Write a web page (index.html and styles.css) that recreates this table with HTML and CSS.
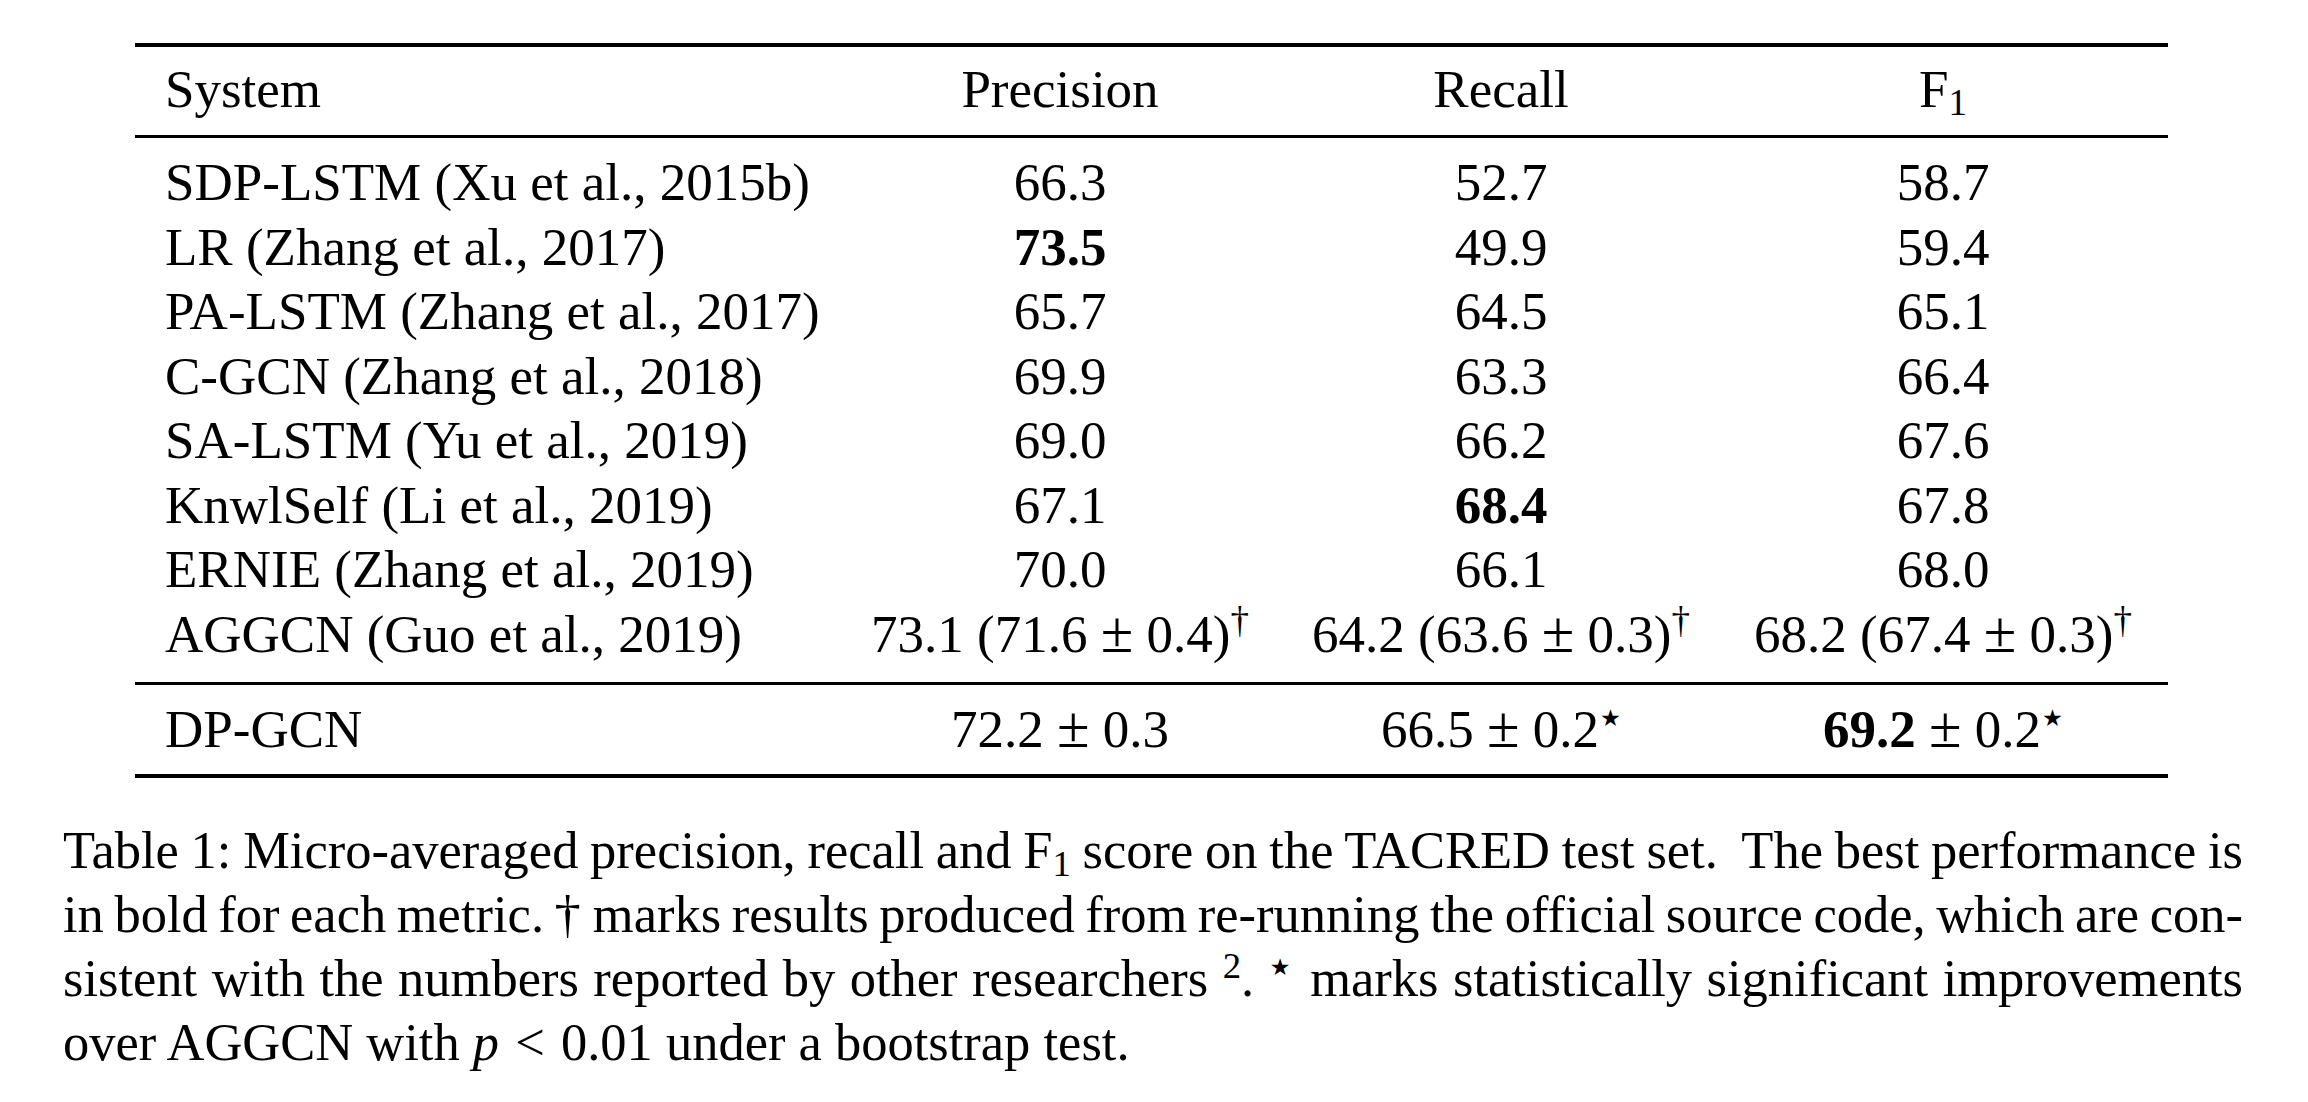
FILE: index.html
```html
<!DOCTYPE html>
<html lang="en">
<head>
<meta charset="utf-8">
<title>Table 1</title>
<link rel="stylesheet" href="styles.css">
</head>
<body>
<div class="figure">
  <div class="booktab">
    <div class="rule heavy"></div>
    <div class="row head">
      <div class="cell sys">System</div>
      <div class="cell">Precision</div>
      <div class="cell">Recall</div>
      <div class="cell">F<sub class="sub">1</sub></div>
    </div>
    <div class="rule light"></div>
    <div class="group">
      <div class="row">
        <div class="cell sys">SDP-LSTM (Xu et al., 2015b)</div>
        <div class="cell">66.3</div>
        <div class="cell">52.7</div>
        <div class="cell">58.7</div>
      </div>
      <div class="row">
        <div class="cell sys">LR (Zhang et al., 2017)</div>
        <div class="cell"><b>73.5</b></div>
        <div class="cell">49.9</div>
        <div class="cell">59.4</div>
      </div>
      <div class="row">
        <div class="cell sys">PA-LSTM (Zhang et al., 2017)</div>
        <div class="cell">65.7</div>
        <div class="cell">64.5</div>
        <div class="cell">65.1</div>
      </div>
      <div class="row">
        <div class="cell sys">C-GCN (Zhang et al., 2018)</div>
        <div class="cell">69.9</div>
        <div class="cell">63.3</div>
        <div class="cell">66.4</div>
      </div>
      <div class="row">
        <div class="cell sys">SA-LSTM (Yu et al., 2019)</div>
        <div class="cell">69.0</div>
        <div class="cell">66.2</div>
        <div class="cell">67.6</div>
      </div>
      <div class="row">
        <div class="cell sys">KnwlSelf (Li et al., 2019)</div>
        <div class="cell">67.1</div>
        <div class="cell"><b>68.4</b></div>
        <div class="cell">67.8</div>
      </div>
      <div class="row">
        <div class="cell sys">ERNIE (Zhang et al., 2019)</div>
        <div class="cell">70.0</div>
        <div class="cell">66.1</div>
        <div class="cell">68.0</div>
      </div>
      <div class="row">
        <div class="cell sys">AGGCN (Guo et al., 2019)</div>
        <div class="cell">73.1 (71.6 <span class="pm">±</span> 0.4)<sup class="sup">†</sup></div>
        <div class="cell">64.2 (63.6 <span class="pm">±</span> 0.3)<sup class="sup">†</sup></div>
        <div class="cell">68.2 (67.4 <span class="pm">±</span> 0.3)<sup class="sup">†</sup></div>
      </div>
    </div>
    <div class="rule light"></div>
    <div class="group last">
      <div class="row">
        <div class="cell sys">DP-GCN</div>
        <div class="cell">72.2 <span class="pm">±</span> 0.3</div>
        <div class="cell">66.5 <span class="pm">±</span> 0.2<sup class="sup star">★</sup></div>
        <div class="cell"><b>69.2</b> <span class="pm">±</span> 0.2<sup class="sup star">★</sup></div>
      </div>
    </div>
    <div class="rule heavy"></div>
  </div>

  <p class="caption">
    <span class="line">Table 1: Micro-averaged precision, recall and F<sub class="sub">1</sub> score on the TACRED test set. &nbsp;The best performance is</span>
    <span class="line">in bold for each metric. † marks results produced from re-running the official source code, which are con-</span>
    <span class="line">sistent with the numbers reported by other researchers <sup class="sup">2</sup>. <sup class="sup star">★</sup> marks statistically significant improvements</span>
    <span class="line final">over AGGCN with <i>p</i> <span class="rel">&lt;</span> 0.01 under a bootstrap test.</span>
  </p>
</div>
</body>
</html>
```

FILE: styles.css
```css
* {
  box-sizing: border-box;
}

html,
body {
  margin: 0;
  padding: 0;
  background: #ffffff;
}

body {
  font-family: "Liberation Serif", "Times New Roman", serif;
  color: #000000;
  font-size: 53px;
}

.figure {
  width: 2180px;
  margin-left: 63px;
  padding-top: 43px;
}

.booktab {
  width: 2033px;
  margin-left: 72px;
}

.rule {
  background: #000000;
}

.rule.heavy {
  height: 4px;
}

.rule.light {
  height: 3px;
}

.row {
  display: grid;
  grid-template-columns: 701px 448px 434px 450px;
  line-height: 64.5px;
}

.cell {
  text-align: center;
  white-space: nowrap;
}

.cell.sys {
  text-align: left;
  padding-left: 30px;
}

.head {
  line-height: 64px;
  padding: 10px 0 14px;
}

.group {
  padding: 12px 0 16px;
}

.group.last {
  padding: 12px 0 12.5px;
}

b {
  font-weight: 700;
}

.pm {
  font-size: 1.12em;
  line-height: 0;
}

.sup {
  font-size: 0.7em;
  line-height: 0;
  vertical-align: 0.5em;
}

.sup.star {
  font-family: "DejaVu Sans", "Liberation Serif", serif;
  font-size: 0.44em;
  vertical-align: 0.9em;
  margin-left: 1px;
}

.sub {
  font-size: 0.7em;
  line-height: 0;
  vertical-align: -0.22em;
}

.caption {
  margin: 40px 0 0;
  font-size: 52.5px;
  line-height: 64px;
  word-spacing: -4px;
}

.line {
  display: block;
  white-space: nowrap;
  text-align: justify;
  text-align-last: justify;
}

.line.final {
  text-align-last: left;
  word-spacing: 0;
}

.rel {
  margin: 0 3px;
}

i {
  font-style: italic;
}
```
